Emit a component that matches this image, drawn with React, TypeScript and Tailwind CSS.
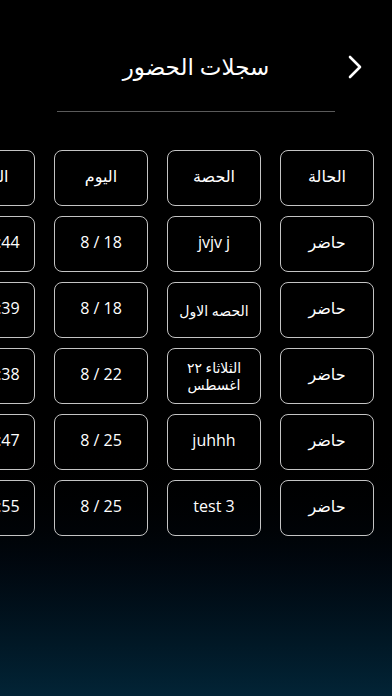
const rows: string[][] = [
  ["الحالة", "الحصة", "اليوم", "الوقت"],
  ["حاضر", "jvjv j", "8 / 18", "10:12:44"],
  ["حاضر", "الحصه الاول", "8 / 18", "10:15:39"],
  ["حاضر", "الثلاثاء ٢٢ اغسطس", "8 / 22", "10:20:38"],
  ["حاضر", "juhhh", "8 / 25", "10:21:47"],
  ["حاضر", "test 3", "8 / 25", "10:24:55"],
];

const small = new Set(["الحصه الاول", "الثلاثاء ٢٢ اغسطس"]);

const Cell = ({ text }: { text: string }) => (
  <div className="w-[94px] h-[56px] shrink-0 rounded-[8px] border border-[#c4c4c4] flex items-center justify-center text-center px-1">
    <span
      dir="auto"
      className={
        small.has(text)
          ? "text-[14px] leading-[17px] text-white"
          : "text-[16px] leading-[20px] text-white pb-[4px]"
      }
    >
      {text}
    </span>
  </div>
);

export default function App() {
  return (
    <div
      className="w-[392px] h-[696px] overflow-hidden bg-gradient-to-b from-black via-black via-[62%] to-[#022436]"
      style={{ fontFamily: '"Open Sans", "DejaVu Sans", sans-serif' }}
    >
      <div className="grid grid-cols-[1fr_auto_1fr] items-center pt-[50px]">
        <div />
        <h1 className="text-white text-[23px] leading-[32px] pb-[2px]" dir="rtl">
          سجلات الحضور
        </h1>
        <div className="flex justify-end pr-[28px]">
          <svg width="18" height="26" viewBox="0 0 18 26" fill="none">
            <polyline
              points="4,3 14,13 4,23"
              stroke="white"
              strokeWidth="2.6"
              strokeLinecap="round"
              strokeLinejoin="round"
            />
          </svg>
        </div>
      </div>
      <div className="mx-[57px] mt-[27px] h-px bg-[#5a5a5a]" />
      <div dir="rtl" className="mt-[38px] pr-[18px] flex flex-col gap-[10px] overflow-hidden">
        {rows.map((r, i) => (
          <div key={i} className="flex gap-[19px]">
            {r.map((t, j) => (
              <Cell key={j} text={t} />
            ))}
          </div>
        ))}
      </div>
    </div>
  );
}
